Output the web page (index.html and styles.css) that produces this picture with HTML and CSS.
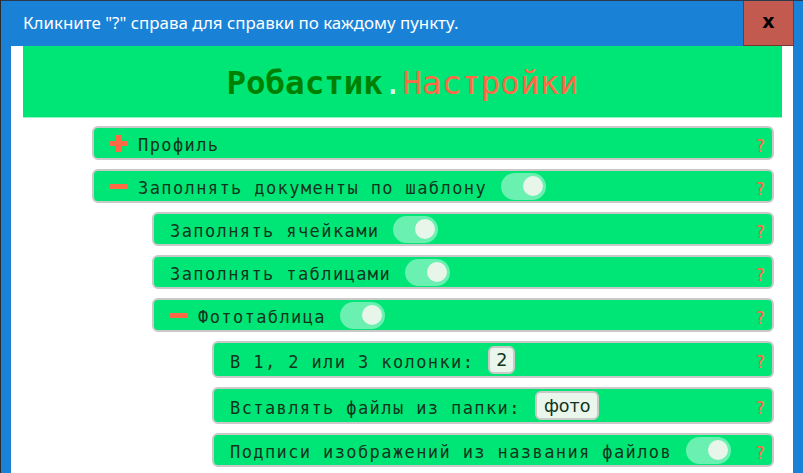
FILE: index.html
```html
<!DOCTYPE html>
<html lang="ru">
<head>
<meta charset="utf-8">
<title>Робастик. Настройки</title>
<link rel="stylesheet" href="styles.css">
</head>
<body>
<div class="window">
  <div class="titlebar">
    <span class="title">Кликните "?" справа для справки по каждому пункту.</span>
    <div class="close">x</div>
  </div>
  <div class="client">
    <header class="banner"><b class="brand">Робастик</b><span class="dot">.</span><span class="sub">Настройки</span></header>
    <div class="tree">
      <div class="row lvl1">
        <svg class="ico" width="17" height="17" viewBox="0 0 17 17"><rect x="6" y="0" width="5" height="17" fill="#ff6a45"/><rect x="0" y="6" width="17" height="5" fill="#ff6a45"/></svg>
        <span class="label">Профиль</span>
        <span class="help">?</span>
      </div>
      <div class="row lvl1">
        <svg class="ico" width="17" height="17" viewBox="0 0 17 17"><rect x="0" y="6" width="17" height="5" fill="#ff6a45"/></svg>
        <span class="label">Заполнять документы по шаблону</span>
        <span class="toggle"><span class="knob"></span></span>
        <span class="help">?</span>
      </div>
      <div class="row lvl2">
        <span class="label">Заполнять ячейками</span>
        <span class="toggle"><span class="knob"></span></span>
        <span class="help">?</span>
      </div>
      <div class="row lvl2">
        <span class="label">Заполнять таблицами</span>
        <span class="toggle"><span class="knob"></span></span>
        <span class="help">?</span>
      </div>
      <div class="row lvl2">
        <svg class="ico" width="17" height="17" viewBox="0 0 17 17"><rect x="0" y="6" width="17" height="5" fill="#ff6a45"/></svg>
        <span class="label">Фототаблица</span>
        <span class="toggle"><span class="knob"></span></span>
        <span class="help">?</span>
      </div>
      <div class="row lvl3 tall">
        <span class="label">В 1, 2 или 3 колонки:</span>
        <span class="field narrow">2</span>
        <span class="help">?</span>
      </div>
      <div class="row lvl3 tall">
        <span class="label">Вставлять файлы из папки:</span>
        <span class="field">фото</span>
        <span class="help">?</span>
      </div>
      <div class="row lvl3">
        <span class="label">Подписи изображений из названия файлов</span>
        <span class="toggle"><span class="knob"></span></span>
        <span class="help">?</span>
      </div>
    </div>
  </div>
</div>
</body>
</html>
```

FILE: styles.css
```css
html, body {
  margin: 0;
  padding: 0;
  overflow: hidden;
}
body {
  width: 803px;
  height: 473px;
}
.window {
  box-sizing: border-box;
  width: 803px;
  height: 473px;
  background: #1a82d6;
  border-left: 1px solid #2b2b2b;
  display: flex;
  flex-direction: column;
}
.titlebar {
  height: 46px;
  flex: none;
  display: flex;
  align-items: center;
  box-sizing: border-box;
  border-top: 1px solid #2b3a4a;
}
.title {
  color: #ffffff;
  font-family: "Noto Sans", "Open Sans", sans-serif;
  font-size: 16.9px;
  margin-left: 22px;
  margin-top: -2px;
}
.close {
  margin-left: auto;
  margin-right: 9px;
  width: 51px;
  height: 45px;
  box-sizing: border-box;
  background: #c35a50;
  border: 1px solid #7d3530;
  border-top: none;
  align-self: flex-start;
  display: flex;
  align-items: center;
  justify-content: center;
  color: #000;
  font-family: "DejaVu Sans", sans-serif;
  font-weight: bold;
  font-size: 19px;
  padding-bottom: 4px;
}
.client {
  flex: 1;
  background: #ffffff;
  margin: 0 10px 0 10px;
  padding: 0 11px 0 12px;
  overflow: hidden;
}
.banner {
  height: 72px;
  background: #00e676;
  border-bottom: 1px solid #8ff5c0;
  display: flex;
  align-items: center;
  justify-content: center;
  font-family: "DejaVu Sans Mono", monospace;
  font-size: 32.5px;
  padding-top: 2px;
  box-sizing: border-box;
}
.brand {
  color: #008000;
  font-weight: bold;
}
.dot {
  color: #d6f7e4;
}
.sub {
  color: #ff6a45;
}
.tree {
  display: flex;
  flex-direction: column;
  gap: 9px;
  padding: 8px 8px 0 0;
}
.row {
  display: flex;
  align-items: center;
  box-sizing: border-box;
  height: 34px;
  background: #00e676;
  border: 2px solid #c9c9c9;
  border-radius: 6px;
  padding: 4px 7px 0 16px;
  font-family: "DejaVu Sans Mono", monospace;
  font-size: 17px;
  letter-spacing: 1.4px;
  color: #10351d;
}
.row.tall {
  height: 37px;
}
.lvl1 { margin-left: 69px; }
.lvl2 { margin-left: 129px; }
.lvl3 { margin-left: 189px; }
.ico {
  flex: none;
  margin-right: 11px;
  margin-top: -3px;
}
.label {
  white-space: nowrap;
}
.toggle {
  flex: none;
  width: 45px;
  height: 27px;
  border-radius: 14px;
  background: #6af0b0;
  margin-left: 14px;
  margin-top: -4px;
  display: flex;
  align-items: center;
  justify-content: flex-end;
  padding-right: 3px;
  box-sizing: border-box;
}
.knob {
  width: 20px;
  height: 20px;
  border-radius: 50%;
  background: #e8f6ea;
}
.field {
  flex: none;
  box-sizing: border-box;
  height: 29px;
  background: #eaf6ec;
  border: 2px solid #c9c9c9;
  border-radius: 6px;
  padding: 0 7px;
  margin-left: 14px;
  margin-top: -4px;
  display: flex;
  align-items: center;
  font-family: "DejaVu Sans", sans-serif;
  font-size: 17.5px;
  letter-spacing: 0;
  color: #10351d;
}
.field.narrow {
  width: 27px;
  height: 28px;
  justify-content: center;
  padding: 0;
}
.help {
  margin-left: auto;
  color: #ff6a45;
  font-family: "DejaVu Sans", sans-serif;
  font-size: 18px;
  letter-spacing: 0;
}
```
